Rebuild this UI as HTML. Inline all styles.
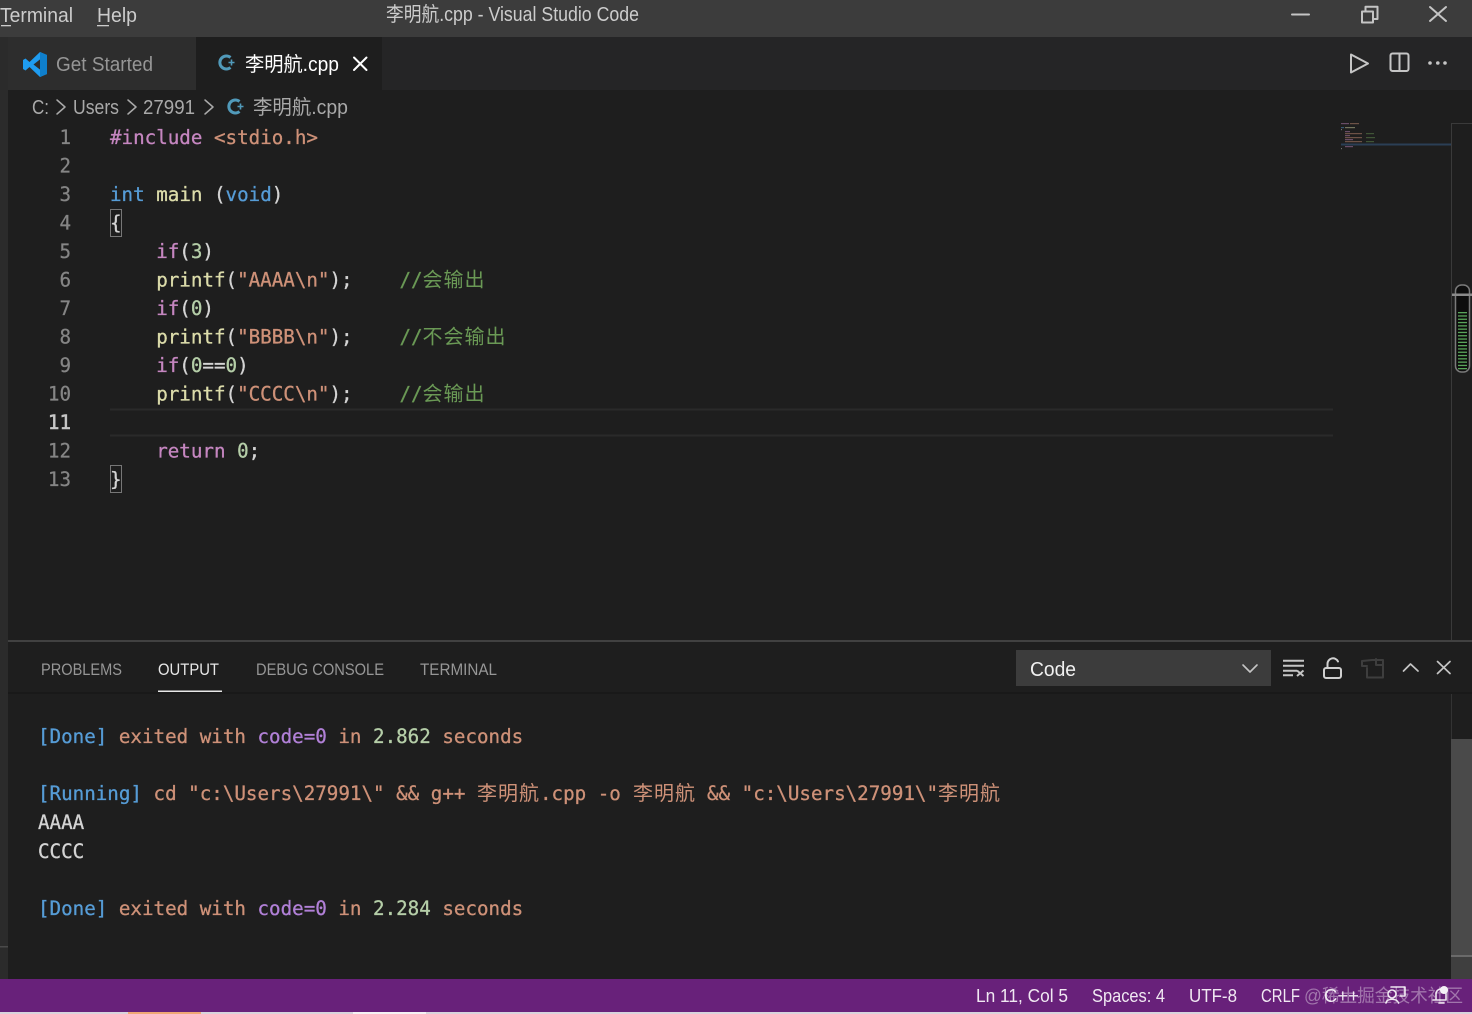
<!DOCTYPE html>
<html><head><meta charset="utf-8"><title>李明航.cpp - Visual Studio Code</title>
<style>
html,body{margin:0;padding:0;background:#1e1e1e;width:1472px;height:1014px;overflow:hidden}
svg{display:block}
text{white-space:pre}
.ui{font-family:"Liberation Sans","Noto Sans CJK SC",sans-serif}
.m{font-family:"DejaVu Sans Mono","Liberation Mono",monospace;font-size:19.2px;stroke-width:.3px}
.m text{transform:translateY(1px)}
.ln{font-family:"DejaVu Sans Mono","Liberation Mono",monospace;font-size:19.2px;fill:#858585;stroke:#858585;stroke-width:.25px;text-anchor:end;transform:translateY(1px)}
.k{fill:#c586c0;stroke:#c586c0}.s{fill:#ce9178;stroke:#ce9178}.b{fill:#569cd6;stroke:#569cd6}.f{fill:#dcdcaa;stroke:#dcdcaa}.p{fill:#d4d4d4}.c{fill:#6a9955;stroke:#6a9955}.n{fill:#b5cea8;stroke:#b5cea8}.o{fill:#b180d7;stroke:#b180d7}
.m text.cj{font-family:"Noto Sans CJK SC",sans-serif;font-size:20px;letter-spacing:1px;stroke:none;transform:none}
.ic{fill:none;stroke:#c5c5c5;stroke-width:2;stroke-linecap:round;stroke-linejoin:round}
</style></head>
<body>
<svg width="1472" height="1014" viewBox="0 0 1472 1014" xmlns="http://www.w3.org/2000/svg">
<rect width="1472" height="1014" fill="#1e1e1e"/>
<!-- left strip -->
<rect x="0" y="37" width="8" height="942" fill="#2b2b2b"/>
<rect x="0" y="946" width="8" height="1.5" fill="#4a4a4a"/>
<!-- title bar -->
<rect width="1472" height="37" fill="#3c3c3c"/>
<g class="ui" font-size="20" fill="#cccccc">
<text x="0" y="22" textLength="73" lengthAdjust="spacingAndGlyphs">Terminal</text>
<text x="97" y="22" textLength="40" lengthAdjust="spacingAndGlyphs">Help</text>
<text x="386" y="21" textLength="253" lengthAdjust="spacingAndGlyphs">李明航.cpp - Visual Studio Code</text>
</g>
<rect x="1" y="25" width="10" height="1.3" fill="#cccccc"/>
<rect x="97" y="25" width="12" height="1.3" fill="#cccccc"/>
<g class="ic" stroke="#cccccc">
<path d="M1292 14.5H1309"/>
<path d="M1362 11.5H1373V22.5H1362Z"/>
<path d="M1365.5 11V6.8H1377.5V19H1373.5"/>
<path d="M1430 7L1446 21M1446 7L1430 21"/>
</g>
<!-- tab row -->
<rect x="8" y="37" width="1464" height="53" fill="#252526"/>
<rect x="8" y="37" width="188" height="53" fill="#2d2d2d"/>
<rect x="196" y="37" width="186" height="53" fill="#1e1e1e"/>
<!-- VS Code logo -->
<path d="M40 52L47 55V74L40 77L29.500 67L25.500 70.500L23 69V60L25.500 58.500L29.500 62ZM40.500 59L33.500 64.500L40.500 70Z" fill="#1f9cf0"/>
<path d="M40 52L47 55V74L40 77Z" fill="#0f7fcc"/>
<g class="ui" font-size="20">
<text x="56" y="71" fill="#969696" textLength="97" lengthAdjust="spacingAndGlyphs">Get Started</text>
<text x="245" y="71" fill="#ffffff" textLength="94" lengthAdjust="spacingAndGlyphs">李明航.cpp</text>
</g>
<!-- cpp icon tab -->
<g fill="none" stroke="#519aba" stroke-width="3">
<path d="M230.500 57.500A6.500 6.500 0 1 0 230.500 67.500"/>
<path d="M228.500 62.500H234.500M231.500 59.500V65.500" stroke-width="1.600"/>
</g>
<path class="ic" d="M354 57.500L366.500 70M366.500 57.500L354 70" style="stroke:#fff"/>
<g class="ic">
<path d="M1351 54.500L1368 63.500L1351 72.500Z"/>
<rect x="1390.500" y="53.500" width="18" height="17.500" rx="2"/>
<path d="M1399.500 54V71"/>
</g>
<g fill="#c5c5c5"><circle cx="1430" cy="63" r="1.800"/><circle cx="1437.800" cy="63" r="1.800"/><circle cx="1445" cy="63" r="1.800"/></g>
<!-- breadcrumbs -->
<g class="ui" font-size="20" fill="#a9a9a9">
<text x="32" y="114" textLength="17" lengthAdjust="spacingAndGlyphs">C:</text>
<text x="73" y="114" textLength="46" lengthAdjust="spacingAndGlyphs">Users</text>
<text x="143" y="114" textLength="52" lengthAdjust="spacingAndGlyphs">27991</text>
<text x="253" y="114" textLength="95" lengthAdjust="spacingAndGlyphs">李明航.cpp</text>
</g>
<g class="ic" style="stroke-width:1.500;stroke:#a9a9a9">
<path d="M57 100L65 107L57 114"/>
<path d="M128 100L136 107L128 114"/>
<path d="M205 100L213 107L205 114"/>
</g>
<g fill="none" stroke="#519aba" stroke-width="3">
<path d="M239.500 101.500A6.500 6.500 0 1 0 239.500 111.500"/>
<path d="M237.500 106.500H243.500M240.500 103.500V109.500" stroke-width="1.600"/>
</g>
<!-- current line -->
<rect x="110" y="408.500" width="1223" height="2" fill="#2a2a2a"/>
<rect x="110" y="434.500" width="1223" height="2" fill="#2a2a2a"/>
<rect x="110.500" y="209.500" width="11" height="27" fill="none" stroke="#777777" stroke-width="1"/>
<rect x="110.500" y="465.500" width="11" height="27" fill="none" stroke="#777777" stroke-width="1"/>
<!-- line numbers -->
<text class="ln" x="71" y="143">1</text>
<text class="ln" x="71" y="171.500">2</text>
<text class="ln" x="71" y="200">3</text>
<text class="ln" x="71" y="228.500">4</text>
<text class="ln" x="71" y="257">5</text>
<text class="ln" x="71" y="285.500">6</text>
<text class="ln" x="71" y="314">7</text>
<text class="ln" x="71" y="342.500">8</text>
<text class="ln" x="71" y="371">9</text>
<text class="ln" x="71" y="399.500">10</text>
<text class="ln" x="71" y="428" style="fill:#c6c6c6;stroke:#c6c6c6;stroke-width:.5px">11</text>
<text class="ln" x="71" y="456.500">12</text>
<text class="ln" x="71" y="485">13</text>
<!-- code -->
<g class="m" fill="#d4d4d4" stroke="#d4d4d4">
<text x="110" y="143"><tspan class="k">#include</tspan> <tspan class="s">&lt;stdio.h&gt;</tspan></text>
<text x="110" y="200"><tspan class="b">int</tspan> <tspan class="f">main</tspan> (<tspan class="b">void</tspan>)</text>
<text x="110" y="228.500">{</text>
<text x="156.200" y="257"><tspan class="k">if</tspan>(<tspan class="n">3</tspan>)</text>
<text x="156.200" y="285.500"><tspan class="f">printf</tspan>(<tspan class="s">"AAAA\n"</tspan>);</text>
<text x="399.500" y="285.500"><tspan class="c">//</tspan></text>
<text class="cj c" x="422.500" y="286.500">会输出</text>
<text x="156.200" y="314"><tspan class="k">if</tspan>(<tspan class="n">0</tspan>)</text>
<text x="156.200" y="342.500"><tspan class="f">printf</tspan>(<tspan class="s">"BBBB\n"</tspan>);</text>
<text x="399.500" y="342.500"><tspan class="c">//</tspan></text>
<text class="cj c" x="422.500" y="343.500">不会输出</text>
<text x="156.200" y="371"><tspan class="k">if</tspan>(<tspan class="n">0</tspan>==<tspan class="n">0</tspan>)</text>
<text x="156.200" y="399.500"><tspan class="f">printf</tspan>(<tspan class="s">"CCCC\n"</tspan>);</text>
<text x="399.500" y="399.500"><tspan class="c">//</tspan></text>
<text class="cj c" x="422.500" y="400.500">会输出</text>
<text x="156.200" y="456.500"><tspan class="k">return</tspan> <tspan class="n">0</tspan>;</text>
<text x="110" y="485">}</text>
</g>
<!-- minimap -->
<g opacity=".45">
<rect x="1341" y="123" width="8" height="1.200" fill="#c586c0"/><rect x="1350" y="123" width="9" height="1.200" fill="#ce9178"/>
<rect x="1341" y="127" width="3" height="1.200" fill="#569cd6"/><rect x="1345" y="127" width="10" height="1.200" fill="#dcdcaa"/>
<rect x="1341" y="129" width="1" height="1.200" fill="#d4d4d4"/>
<rect x="1345" y="131" width="5" height="1.200" fill="#c586c0"/>
<rect x="1345" y="133" width="17" height="1.200" fill="#ce9178"/><rect x="1366" y="133" width="8" height="1.200" fill="#6a9955"/>
<rect x="1345" y="135" width="5" height="1.200" fill="#c586c0"/>
<rect x="1345" y="137" width="17" height="1.200" fill="#ce9178"/><rect x="1366" y="137" width="9" height="1.200" fill="#6a9955"/>
<rect x="1345" y="139" width="8" height="1.200" fill="#c586c0"/>
<rect x="1345" y="141" width="17" height="1.200" fill="#ce9178"/><rect x="1366" y="141" width="8" height="1.200" fill="#6a9955"/>
<rect x="1345" y="146" width="8" height="1.200" fill="#c586c0"/>
<rect x="1341" y="148" width="1" height="1.200" fill="#d4d4d4"/>
</g>
<rect x="1341" y="143.500" width="110" height="2" fill="#2b3f55"/>
<!-- overview ruler -->
<rect x="1451" y="123" width="1" height="517" fill="#3a3a3a"/>
<rect x="1451" y="123" width="21" height="1" fill="#3a3a3a"/>
<rect x="1455.500" y="285" width="14" height="87" rx="6" fill="#0d0d0d" stroke="#7a7a7a" stroke-width="1.500"/>
<rect x="1452" y="293.500" width="20" height="2.500" fill="#8a8a8a"/>
<g fill="#5aa55a">
<rect x="1458" y="312" width="9" height="1.300"/><rect x="1458" y="315.300" width="9" height="1.300"/><rect x="1458" y="318.600" width="9" height="1.300"/><rect x="1458" y="321.900" width="9" height="1.300"/><rect x="1458" y="325.200" width="9" height="1.300"/><rect x="1458" y="328.500" width="9" height="1.300"/><rect x="1458" y="331.800" width="9" height="1.300"/><rect x="1458" y="335.100" width="9" height="1.300"/><rect x="1458" y="338.400" width="9" height="1.300"/><rect x="1458" y="341.700" width="9" height="1.300"/><rect x="1458" y="345" width="9" height="1.300"/><rect x="1458" y="348.300" width="9" height="1.300"/><rect x="1458" y="351.600" width="9" height="1.300"/><rect x="1458" y="354.900" width="9" height="1.300"/><rect x="1458" y="358.200" width="9" height="1.300"/><rect x="1458" y="361.500" width="9" height="1.300"/><rect x="1458" y="364.800" width="9" height="1.300"/><rect x="1458" y="368" width="9" height="1.300"/>
</g>
<!-- panel -->
<rect x="8" y="640" width="1464" height="2" fill="#414141"/>
<rect x="8" y="692" width="1464" height="2" fill="#191919"/>
<g class="ui" font-size="16.500">
<text x="41" y="675" fill="#969696" textLength="81" lengthAdjust="spacingAndGlyphs">PROBLEMS</text>
<text x="158" y="675" fill="#e7e7e7" textLength="61" lengthAdjust="spacingAndGlyphs">OUTPUT</text>
<text x="256" y="675" fill="#969696" textLength="128" lengthAdjust="spacingAndGlyphs">DEBUG CONSOLE</text>
<text x="420" y="675" fill="#969696" textLength="77" lengthAdjust="spacingAndGlyphs">TERMINAL</text>
</g>
<rect x="158" y="690.500" width="64" height="1.500" fill="#e7e7e7"/>
<rect x="1016" y="650" width="255" height="36" fill="#3c3c3c"/>
<text class="ui" x="1030" y="676" font-size="20" fill="#f0f0f0" textLength="46" lengthAdjust="spacingAndGlyphs">Code</text>
<path class="ic" style="stroke-width:1.600" d="M1243 665L1250 672L1257 665"/>
<g class="ic" style="stroke-width:2;stroke-linecap:butt">
<path d="M1283 660.700H1304M1283 665.700H1304M1283 670.700H1297M1283 675.200H1293"/>
<path d="M1297 670.500L1303.500 676M1303.500 670.500L1297 676" style="stroke-width:2"/>
</g>
<g class="ic" style="stroke:#d0d0d0">
<rect x="1324" y="668" width="17" height="10" rx="2"/>
<path d="M1327.500 667.500V664A5.500 5.500 0 0 1 1338 661.500"/>
</g>
<g class="ic" style="stroke:#3e3e3e">
<path d="M1367 668V677.500H1383V660H1372.500"/>
<path d="M1372 660L1362 661V666H1367"/>
<path d="M1376 659V665H1383"/>
</g>
<g class="ic" style="stroke-width:1.700">
<path d="M1403.500 671L1410.500 664L1418 671"/>
<path d="M1437.500 661.500L1450 673.500M1450 661.500L1437.500 673.500"/>
</g>
<!-- panel scrollbar -->
<rect x="1451" y="694" width="1" height="45" fill="#333333"/>
<rect x="1451" y="739" width="21" height="216" fill="#4a4a4a"/>
<rect x="1451" y="955" width="21" height="2" fill="#6a6a6a"/>
<rect x="1451" y="957" width="21" height="22" fill="#3f3f3f"/>
<!-- output -->
<g class="m" fill="#ce9178" stroke="#ce9178">
<text x="38" y="742"><tspan class="b">[Done]</tspan> exited with <tspan class="o">code=0</tspan> in <tspan class="n">2.862</tspan> seconds</text>
<text x="38" y="799"><tspan class="b">[Running]</tspan> cd "c:\Users\27991\" &amp;&amp; g++</text>
<text class="cj" x="477" y="800">李明航</text>
<text x="540" y="799">.cpp -o</text>
<text class="cj" x="633" y="800">李明航</text>
<text x="707" y="799">&amp;&amp; "c:\Users\27991\"</text>
<text class="cj" x="938" y="800">李明航</text>
<text x="38" y="828" fill="#d4d4d4" stroke="#d4d4d4">AAAA</text>
<text x="38" y="857" fill="#d4d4d4" stroke="#d4d4d4">CCCC</text>
<text x="38" y="914"><tspan class="b">[Done]</tspan> exited with <tspan class="o">code=0</tspan> in <tspan class="n">2.284</tspan> seconds</text>
</g>
<!-- status bar -->
<rect x="0" y="979" width="1472" height="33" fill="#68217a"/>
<rect x="0" y="1012" width="1472" height="2" fill="#d8d4dc"/>
<rect x="128" y="1012" width="73" height="2" fill="#f0a874"/>
<rect x="353" y="1012" width="73" height="2" fill="#f4f2f4"/>
<g class="ui" font-size="18" fill="#f0e8f2">
<text x="976" y="1002" textLength="92" lengthAdjust="spacingAndGlyphs">Ln 11, Col 5</text>
<text x="1092" y="1002" textLength="73" lengthAdjust="spacingAndGlyphs">Spaces: 4</text>
<text x="1189" y="1002" textLength="48" lengthAdjust="spacingAndGlyphs">UTF-8</text>
<text x="1261" y="1002" textLength="39" lengthAdjust="spacingAndGlyphs">CRLF</text>
<text x="1324" y="1002" textLength="35" lengthAdjust="spacingAndGlyphs">C++</text>
</g>
<g class="ic" style="stroke:#eee6f0;stroke-width:1.600">
<circle cx="1392" cy="994" r="4"/>
<path d="M1386 1003C1387 998 1397 998 1398.500 1003"/>
<path d="M1391 987H1405V996H1400"/>
<path d="M1436 1000V994A5 5 0 0 1 1446 994V1000H1433Z"/>
<path d="M1439 1003H1444"/>
</g>
<circle cx="1444" cy="990" r="4" fill="#f4f0f6"/>
<text x="1304" y="1002" font-family="&quot;Liberation Sans&quot;,&quot;Noto Sans CJK SC&quot;,sans-serif" font-size="18" fill="#ffffff" fill-opacity=".38" textLength="159" lengthAdjust="spacingAndGlyphs">@稀土掘金技术社区</text>
</svg>
</body></html>
